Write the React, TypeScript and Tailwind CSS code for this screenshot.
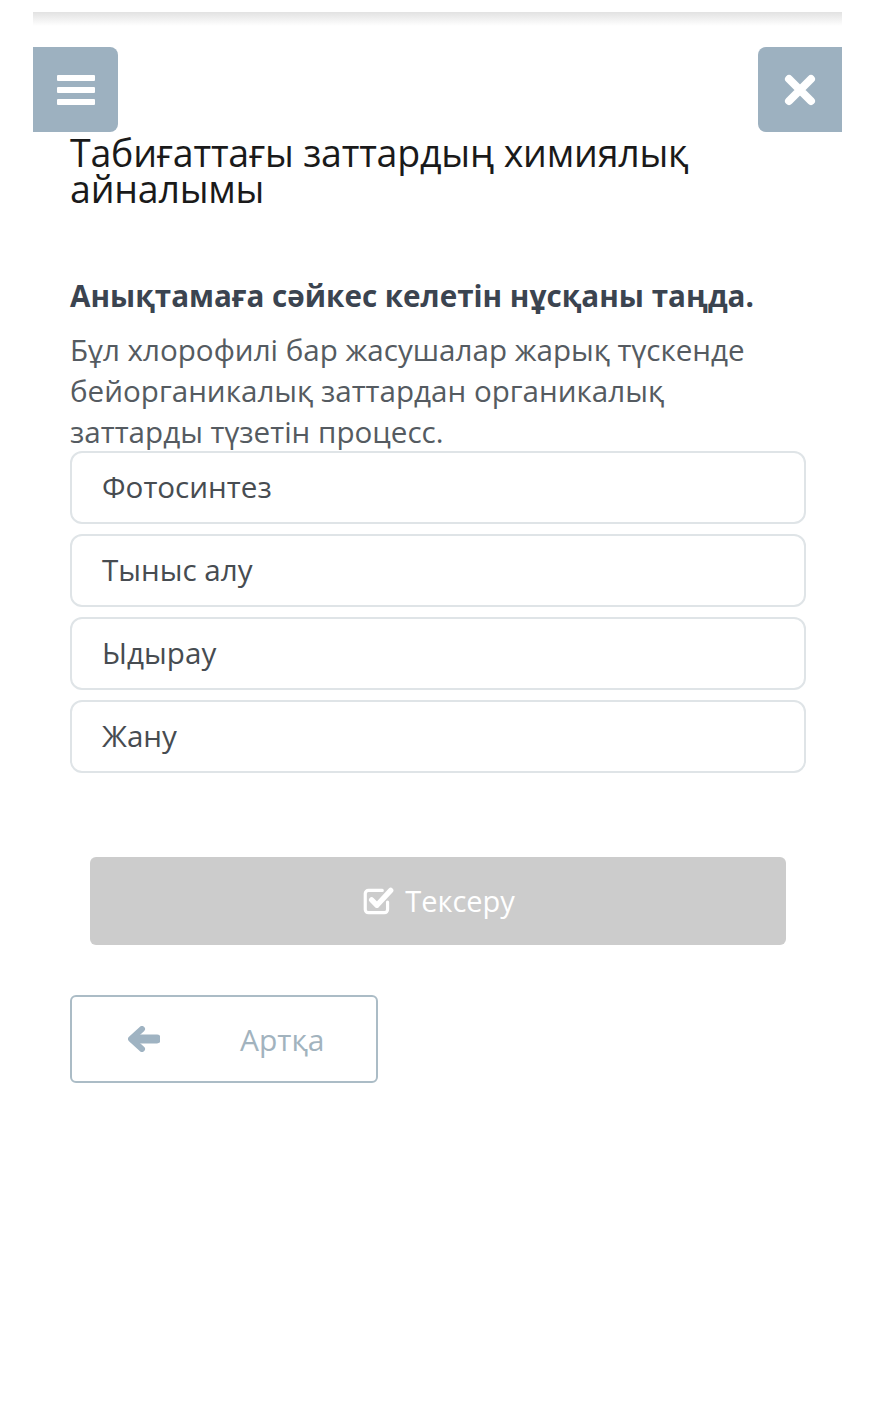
import React from "react";

const font = { fontFamily: '"Open Sans", "Noto Sans", sans-serif' };

function CheckSquare() {
  return (
    <svg width="34" height="34" viewBox="0 0 32 32" fill="none">
      <path d="M25 17v7a3 3 0 0 1-3 3H7a3 3 0 0 1-3-3V9a3 3 0 0 1 3-3h13" stroke="white" strokeWidth="3" strokeLinecap="round" />
      <path d="M10 15l5 5L28 6" stroke="white" strokeWidth="5" strokeLinecap="round" strokeLinejoin="round" />
    </svg>
  );
}

function ArrowLeft() {
  return (
    <svg width="32" height="26" viewBox="0 0 32 26">
      <path d="M14 3 L3 13 L14 23" fill="none" stroke="#9fb3c2" strokeWidth="6" strokeLinecap="round" strokeLinejoin="round" />
      <path d="M6 13 H29" stroke="#9fb3c2" strokeWidth="9" strokeLinecap="round" />
    </svg>
  );
}

export default function App() {
  const options = ["Фотосинтез", "Тыныс алу", "Ыдырау", "Жану"];
  return (
    <div className="w-[885px] h-[1403px] bg-white" style={font}>
      <div className="pl-[33px] pr-[43px] pt-[12px]">
        <div className="h-[14px] bg-gradient-to-b from-[#e2e2e2] to-white" />
        <div className="flex justify-between mt-[21px]">
          <div className="w-[85px] h-[85px] bg-[#9db1c0] rounded-r-[8px] flex items-center justify-center">
            <div className="flex flex-col gap-[6px]">
              <div className="w-[38px] h-[6px] bg-white rounded-[1px]" />
              <div className="w-[38px] h-[6px] bg-white rounded-[1px]" />
              <div className="w-[38px] h-[6px] bg-white rounded-[1px]" />
            </div>
          </div>
          <div className="w-[84px] h-[85px] bg-[#9db1c0] rounded-l-[8px] flex items-center justify-center">
            <svg width="34" height="34" viewBox="0 0 34 34">
              <path d="M6 6 L28 28 M28 6 L6 28" stroke="white" strokeWidth="8" strokeLinecap="round" />
            </svg>
          </div>
        </div>
        <div className="pl-[37px] pr-[36px]">
          <h1 className="text-[37.5px] leading-[36px] text-[#1a1a1a] mt-[3px] tracking-[-0.2px]">
            Табиғаттағы заттардың химиялық айналымы
          </h1>
          <p className="mt-[72px] text-[29.6px] leading-[34px] font-bold text-[#3b4450]">
            Анықтамаға сәйкес келетін нұсқаны таңда.
          </p>
          <p className="mt-[16px] pr-[30px] text-[29.6px] leading-[41px] text-[#555b61]">
            Бұл хлорофилі бар жасушалар жарық түскенде бейорганикалық заттардан органикалық заттарды түзетін процесс.
          </p>
          <div className="flex flex-col gap-[10px] mt-[-1px]">
            {options.map((o) => (
              <div
                key={o}
                className="h-[73px] border-2 border-[#dfe4e7] rounded-[12px] flex items-center pl-[30px] text-[29.6px] text-[#474c51]"
              >
                {o}
              </div>
            ))}
          </div>
          <div className="px-[20px] mt-[84px]">
            <div className="h-[88px] bg-[#cccccc] rounded-[6px] flex items-center justify-center gap-[10px] text-white text-[29px]">
              <CheckSquare />
              <span>Тексеру</span>
            </div>
          </div>
          <div className="mt-[50px] w-[308px] h-[88px] border-2 border-[#abbcc6] rounded-[6px] flex items-center">
            <div className="ml-[56px]">
              <ArrowLeft />
            </div>
            <span className="ml-[80px] text-[30px] text-[#a2b3be]">Артқа</span>
          </div>
        </div>
      </div>
    </div>
  );
}
